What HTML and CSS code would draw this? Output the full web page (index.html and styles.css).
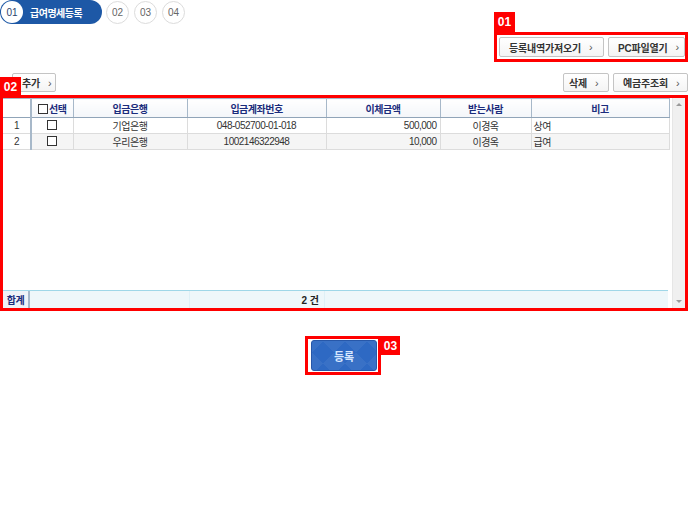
FILE: index.html
```html
<!DOCTYPE html>
<html lang="ko">
<head>
<meta charset="utf-8">
<title>급여명세등록</title>
<link rel="stylesheet" href="styles.css">
</head>
<body>
<div class="page">
  <nav class="steps">
    <div class="step-active"><span class="step-num">01</span><span class="step-label">급여명세등록</span></div>
    <span class="step">02</span>
    <span class="step">03</span>
    <span class="step">04</span>
  </nav>

  <div class="top-actions">
    <div class="anno anno-1">
      <span class="tag tag-1">01</span>
      <button class="btn btn-wide">등록내역가져오기<span class="chev">›</span></button>
      <button class="btn btn-pc">PC파일열기<span class="chev">›</span></button>
    </div>
  </div>

  <div class="toolbar">
    <button class="btn btn-add">추가<span class="chev">›</span></button>
    <div class="toolbar-right">
      <button class="btn btn-del">삭제<span class="chev">›</span></button>
      <button class="btn btn-owner">예금주조회<span class="chev">›</span></button>
    </div>
  </div>

  <div class="anno anno-2">
    <span class="tag tag-2">02</span>
    <div class="grid-wrap">
      <div class="grid-main">
        <table class="grid">
          <colgroup>
            <col class="c-rn"><col class="c-chk"><col class="c-bank"><col class="c-acct"><col class="c-amt"><col class="c-recv"><col class="c-note">
          </colgroup>
          <thead>
            <tr>
              <th class="rn"></th>
              <th><span class="box"></span>선택</th>
              <th>입금은행</th>
              <th>입금계좌번호</th>
              <th>이체금액</th>
              <th>받는사람</th>
              <th>비고</th>
            </tr>
          </thead>
          <tbody>
            <tr>
              <td class="rn">1</td>
              <td class="ctr"><span class="box"></span></td>
              <td class="ctr">기업은행</td>
              <td class="ctr">048-052700-01-018</td>
              <td class="num">500,000</td>
              <td class="ctr">이경옥</td>
              <td class="left">상여</td>
            </tr>
            <tr class="alt">
              <td class="rn">2</td>
              <td class="ctr"><span class="box"></span></td>
              <td class="ctr">우리은행</td>
              <td class="ctr">1002146322948</td>
              <td class="num">10,000</td>
              <td class="ctr">이경옥</td>
              <td class="left">급여</td>
            </tr>
          </tbody>
        </table>
        <div class="grid-foot">
          <span class="foot-label">합계</span>
          <span class="foot-cell f1"></span>
          <span class="foot-cell f2">2 건</span>
          <span class="foot-cell f3"></span>
        </div>
      </div>
      <div class="scrollbar">
        <span class="arrow up"></span>
        <span class="arrow down"></span>
      </div>
    </div>
  </div>

  <div class="submit-row">
    <div class="anno anno-3">
      <span class="tag tag-3">03</span>
      <button class="btn-submit">등록</button>
    </div>
  </div>
</div>
</body>
</html>
```

FILE: styles.css
```css
* { box-sizing: border-box; }
html, body { margin: 0; padding: 0; background: #fff; }
body {
  font-family: "Liberation Sans", "Noto Sans CJK KR", sans-serif;
  font-size: 10px;
  color: #333;
}
.page { width: 688px; }

/* steps */
.steps { display: flex; align-items: center; gap: 5px; height: 24px; }
.step-active {
  display: flex; align-items: center;
  width: 102px; height: 24px;
  background: #1d58a6; border-radius: 12px;
}
.step-num {
  width: 22px; height: 22px; margin-left: 1px;
  border-radius: 50%; background: #fff;
  display: flex; align-items: center; justify-content: center;
  font-size: 10px; color: #2a3f6e;
}
.step-label { color: #fff; font-weight: bold; font-size: 10px; margin-left: 7px; letter-spacing: -0.5px; white-space: nowrap; }
.step {
  width: 23px; height: 23px; border-radius: 50%;
  border: 1px solid #dcdcdc; background: #fff;
  display: flex; align-items: center; justify-content: center;
  font-size: 10px; color: #666;
}
.steps .step:first-of-type { margin-left: -1px; }

/* annotations */
.anno { position: relative; border: 3px solid #ff0000; }
.tag {
  position: absolute;
  background: #ff0000; color: #fff;
  font-weight: bold; font-size: 12px;
  display: flex; align-items: center; justify-content: center;
  font-family: "Liberation Sans", sans-serif;
}
.tag-1 { left: -3px; top: -23px; width: 21px; height: 20px; }
.tag-2 { left: -3px; top: -21px; width: 21px; height: 19px; }
.tag-3 { left: calc(100% + 3px); top: -3px; width: 19px; height: 19px; }

/* buttons */
.btn {
  display: inline-flex; align-items: center; flex: none;
  height: 20px; padding: 0 0 0 9px;
  border: 1px solid #c4c4c4; border-radius: 2px;
  background: linear-gradient(#fff, #f4f4f4);
  font-family: inherit; font-size: 10px; font-weight: bold; color: #333;
  white-space: nowrap; letter-spacing: -0.2px;
  cursor: pointer;
}
.chev { font-weight: normal; color: #555; margin-left: 8px; font-size: 11px; }

.top-actions { display: flex; justify-content: flex-end; margin-top: 8px; }
.anno-1 { display: flex; align-items: center; gap: 4px; width: 194px; height: 30px; padding: 0 0 0 2px; }
.btn-wide { width: 105px; }
.btn-pc { width: 77px; }

.toolbar { display: flex; justify-content: space-between; align-items: center; margin-top: 11px; height: 19px; }
.toolbar .btn { height: 19px; }
.btn-add { margin-left: 12px; width: 44px; }
.toolbar-right { display: flex; gap: 4px; }
.btn-del { width: 46px; padding-left: 5px; }
.btn-owner { width: 75px; padding-left: 9px; }

/* grid */
.anno-2 { margin-top: 3px; height: 216px; }
.grid-wrap { display: flex; height: 210px; }
.grid-main { flex: 1; display: flex; flex-direction: column; justify-content: space-between; }
.grid {
  border-collapse: collapse; table-layout: fixed;
  width: 666px;
  letter-spacing: -0.5px;
}
.c-rn { width: 28px; } .c-chk { width: 42px; } .c-bank { width: 114px; }
.c-acct { width: 139px; } .c-amt { width: 114px; } .c-recv { width: 91px; } .c-note { width: 138px; }
.grid th {
  height: 19px; padding: 0;
  background: linear-gradient(#ffffff, #f3f6f9);
  border: 1px solid #a7b8c9;
  border-bottom-color: #90a4b8;
  color: #1b2c7c; font-weight: bold; font-size: 10px;
  text-align: center; white-space: nowrap;
}
.grid td {
  height: 16px; padding: 0;
  border: 1px solid #dcdcdc;
  font-size: 10px; color: #333; white-space: nowrap;
}
.grid tr.alt td { background: #f5f5f5; }
.grid td.rn, .grid th.rn { text-align: center; border-right: 2px solid #a7b8c9; background: #fff; }
.grid th.rn { border-left: none; }
.grid td.rn { border-left: none; }
.grid tr.alt td.rn { background: #fff; }
.ctr { text-align: center; }
.num { text-align: right; padding-right: 3px !important; }
.left { text-align: left; padding-left: 2px !important; }
.box {
  display: inline-block; width: 10px; height: 10px;
  border: 1px solid #333; background: #fff;
  vertical-align: -1px;
}
th .box { margin-right: 1px; }

.grid-foot {
  display: flex; height: 18px; width: 665px;
  border-top: 1px solid #9fd7e8;
  background: #eef7fa;
}
.foot-label {
  width: 27px; display: flex; align-items: center; justify-content: center;
  background: #eef2f7; border-right: 2px solid #a7b8c9;
  color: #1b2c7c; font-weight: bold; letter-spacing: -0.5px;
}
.foot-cell { display: flex; align-items: center; justify-content: flex-end; border-right: 1px solid #dff0f6; }
.f1 { width: 160px; }
.f2 { width: 135px; padding-right: 5px; font-weight: bold; color: #222; }
.f3 { flex: 1; border-right: none; }

.scrollbar {
  width: 15px; margin-left: 2px;
  background: #f0f0f0; border-left: 1px solid #e6e6e6;
  display: flex; flex-direction: column; justify-content: space-between; align-items: center;
  padding: 5px 0;
}
.arrow { width: 0; height: 0; border-left: 3px solid transparent; border-right: 3px solid transparent; }
.arrow.up { border-bottom: 3px solid #9a9a9a; }
.arrow.down { border-top: 3px solid #9a9a9a; }

/* submit */
.submit-row { display: flex; justify-content: center; margin-top: 25px; }
.anno-3 { padding: 1px 1px 1px 3px; width: 76px; height: 39px; margin-left: -2px; }
.btn-submit {
  width: 66px; height: 31px;
  border: 1px solid #2757a8; border-radius: 3px;
  background:
    linear-gradient(45deg, rgba(255,255,255,0.05) 25%, transparent 25%, transparent 75%, rgba(255,255,255,0.05) 75%),
    linear-gradient(-45deg, rgba(255,255,255,0.05) 25%, transparent 25%, transparent 75%, rgba(255,255,255,0.05) 75%),
    #2e69c3;
  background-size: 22px 22px;
  color: #d6e7ff; font-family: inherit; font-size: 11px; font-weight: bold;
  cursor: pointer;
}
```
